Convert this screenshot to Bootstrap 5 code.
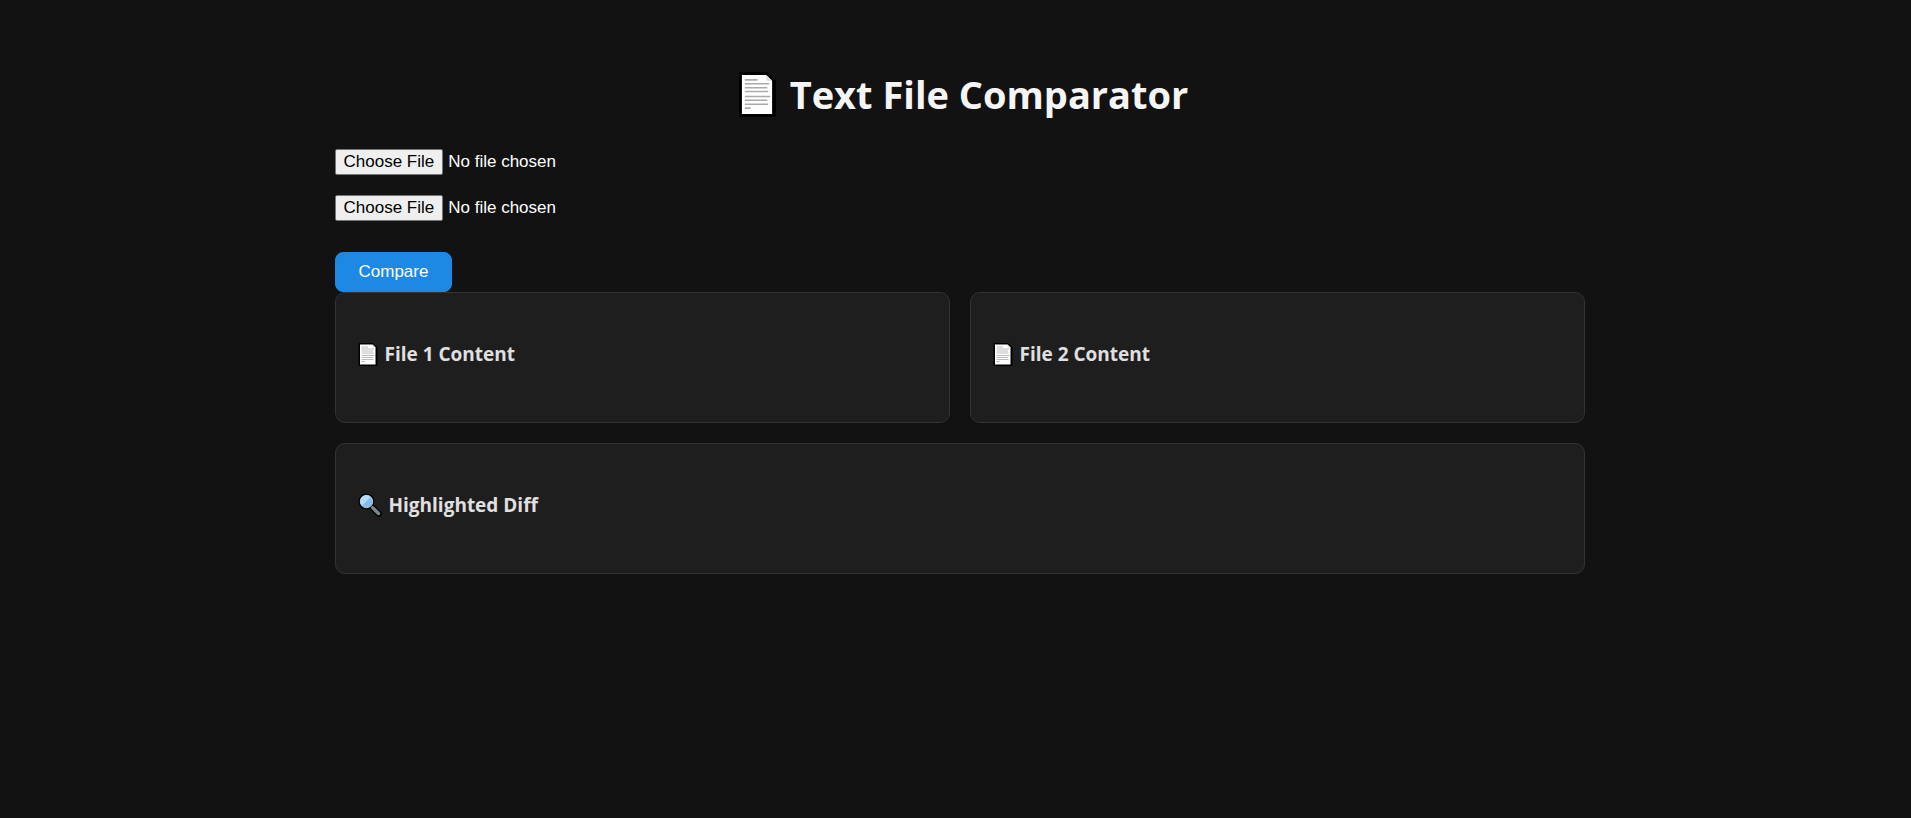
<!DOCTYPE html>
<html lang="en">
<head>
<meta charset="utf-8">
<meta name="viewport" content="width=device-width, initial-scale=1">
<title>Text File Comparator</title>
<link href="https://cdn.jsdelivr.net/npm/bootstrap@5.3.0/dist/css/bootstrap.min.css" rel="stylesheet">
<style>
  body { background: #121212; color: #e0e0e0; padding-left: 8px; font-family: "Segoe UI", "Open Sans", "Noto Sans", sans-serif; }
  .page { max-width: 1298px; }
  .page-title { font-size: 38px; line-height: 53px; font-weight: 700; color: #f5f5f5; gap: 14px; }
  .panel-title { font-size: 19px; line-height: 26px; font-weight: 700; gap: 7px; }
  .file-input, .compare-btn { font-family: Arial, "Liberation Sans", sans-serif; font-size: 17px; }
  .file-input { line-height: 20px; height: 26px; color: #fff; }
  .file-input::file-selector-button { margin: 0 5px 0 0; padding: 2px 8px; color: #000; background: #efefef; border: 1px solid #767676; border-radius: 2px; }
  .compare-btn { --bs-btn-color: #fff; --bs-btn-bg: #1e88e5; --bs-btn-border-color: #1e88e5; --bs-btn-hover-color: #fff; --bs-btn-hover-bg: #1565c0; margin-top: 31px; line-height: 20px; padding: 9px 23px; border-radius: 8px; }
  .panels { gap: 20px; }
  .panel { background: #1e1e1e; border: 1px solid #333; border-radius: 10px; padding: 48px 22px 55px; }
</style>
</head>
<body>
<svg class="d-none" aria-hidden="true">
  <symbol id="document" viewBox="0 0 38 46">
    <path d="M1 1h28l8 8v36H1z" fill="#000" stroke="#000" stroke-width="2" stroke-linejoin="round"/>
    <path d="M3 3h25l6 6v34H3z" fill="#fff"/>
    <path d="M28 3v6h6z" fill="#ddd"/>
    <path d="M6 8h13M6 12h25M6 16h23M6 20h24M6 25h26M6 29h23M6 33h24M6 37h6" stroke="#aaa" stroke-width="1.6"/>
  </symbol>
  <symbol id="magnifier" viewBox="0 0 24 24">
    <path d="M13 13l8 8" stroke="#000" stroke-width="6" stroke-linecap="round"/>
    <circle cx="8.500" cy="8.500" r="8" fill="#000"/>
    <path d="M13.500 13.500l1.500 1.500" stroke="#90a4ae" stroke-width="2"/>
    <path d="M15 15l5.500 5.500" stroke="#78868c" stroke-width="3.500" stroke-linecap="round"/>
    <circle cx="8.500" cy="8.500" r="6.200" fill="#83bdef" stroke="#b0c4ce" stroke-width="1"/>
    <path d="M4 12.500A6 6 0 0 1 12.500 4z" fill="#b6dcfa"/>
  </symbol>
</svg>
<main class="page container-fluid px-4 mx-auto pt-5">
  <h1 class="page-title d-flex align-items-center justify-content-center mt-3 mb-4 pt-1 ps-2">
    <svg width="37" height="45" aria-hidden="true"><use href="#document"/></svg>
    <span>Text File Comparator</span>
  </h1>
  <form class="d-flex flex-column align-items-start">
    <input class="file-input mb-3 mt-1" type="file" id="file1" aria-label="File 1">
    <input class="file-input mt-1" type="file" id="file2" aria-label="File 2">
    <button class="btn compare-btn" type="button">Compare</button>
  </form>
  <div class="panels d-flex flex-column">
    <div class="panels d-flex">
      <section class="panel flex-fill w-50">
        <h2 class="panel-title d-flex align-items-center mb-0">
          <svg width="20" height="23" aria-hidden="true"><use href="#document"/></svg>
          <span>File 1 Content</span>
        </h2>
      </section>
      <section class="panel flex-fill w-50">
        <h2 class="panel-title d-flex align-items-center mb-0">
          <svg width="20" height="23" aria-hidden="true"><use href="#document"/></svg>
          <span>File 2 Content</span>
        </h2>
      </section>
    </div>
    <section class="panel">
      <h2 class="panel-title d-flex align-items-center mb-0">
        <svg width="24" height="24" aria-hidden="true"><use href="#magnifier"/></svg>
        <span>Highlighted Diff</span>
      </h2>
    </section>
  </div>
</main>
</body>
</html>
